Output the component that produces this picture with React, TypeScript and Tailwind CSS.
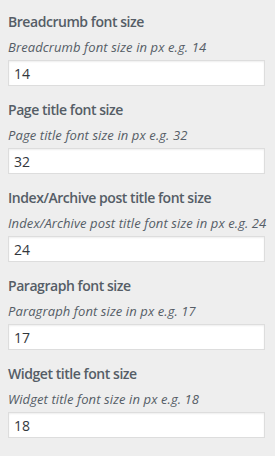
const fields = [
  { title: 'Breadcrumb font size', desc: 'Breadcrumb font size in px e.g. 14', value: '14' },
  { title: 'Page title font size', desc: 'Page title font size in px e.g. 32', value: '32' },
  { title: 'Index/Archive post title font size', desc: 'Index/Archive post title font size in px e.g. 24', value: '24' },
  { title: 'Paragraph font size', desc: 'Paragraph font size in px e.g. 17', value: '17' },
  { title: 'Widget title font size', desc: 'Widget title font size in px e.g. 18', value: '18' },
];

export default function App() {
  return (
    <div className="w-[275px] h-[456px] overflow-hidden bg-[#eeeeee] px-2 pt-[12px] font-['Open_Sans',sans-serif]">
      {fields.map((f) => (
        <div key={f.title} className="h-[88px]">
          <p className="text-[14px] leading-[20px] font-semibold tracking-[-0.45px] text-[#555d66] whitespace-nowrap">{f.title}</p>
          <p className="mt-[5px] text-[13px] leading-[20px] italic tracking-[0.1px] text-[#555d66] whitespace-nowrap">{f.desc}</p>
          <input
            readOnly
            value={f.value}
            className="mt-[3px] block w-[257px] h-[26px] px-[5px] bg-white border border-[#dddddd] shadow-[inset_0_1px_2px_rgba(0,0,0,0.07)] text-[14px] text-[#32373c] outline-none"
          />
        </div>
      ))}
    </div>
  );
}
